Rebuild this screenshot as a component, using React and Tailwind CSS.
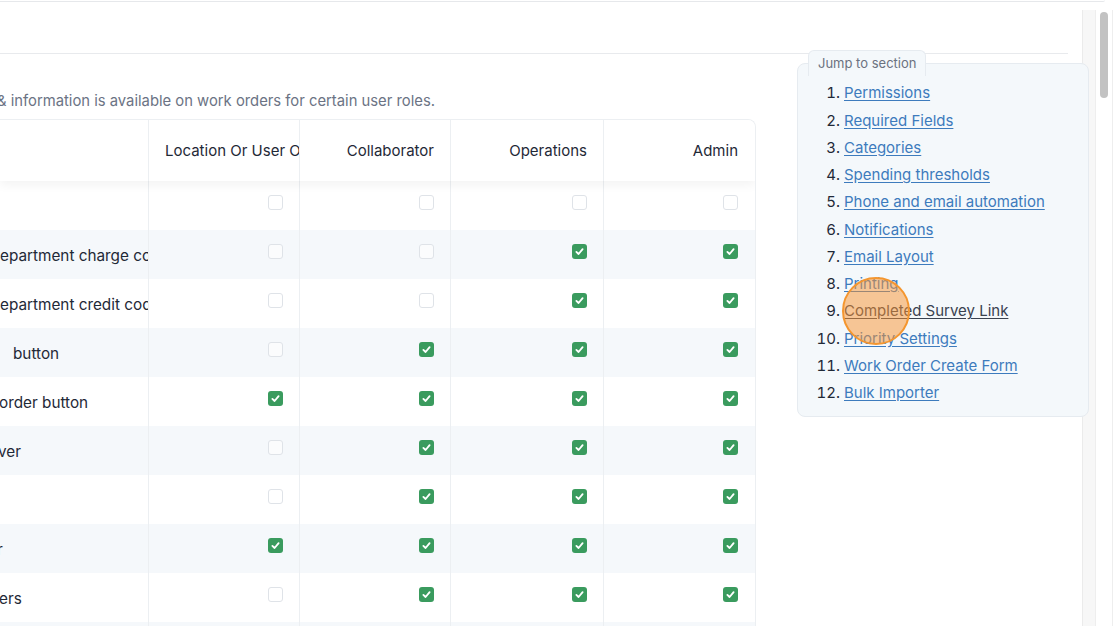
import React from "react";

const roles = ["Location Or User Owner", "Collaborator", "Operations", "Admin"];

// first column is scrolled off to the left, so only the tail of each label shows
const rows = [
  { label: "", shift: "ml-0", checks: [0, 0, 0, 0] },
  { label: "epartment charge codes", shift: "ml-0", checks: [0, 0, 1, 1] },
  { label: "epartment credit codes", shift: "ml-0", checks: [0, 0, 1, 1] },
  { label: "button", shift: "ml-[13px]", checks: [0, 1, 1, 1] },
  { label: "order button", shift: "-ml-[1px]", checks: [1, 1, 1, 1] },
  { label: "ver", shift: "-ml-[2px]", checks: [0, 1, 1, 1] },
  { label: "", shift: "ml-0", checks: [0, 1, 1, 1] },
  { label: "r", shift: "-ml-[3px]", checks: [1, 1, 1, 1] },
  { label: "ers", shift: "-ml-[1px]", checks: [0, 1, 1, 1] },
  { label: "", shift: "ml-0", checks: [0, 0, 0, 0] },
];

const sections = [
  "Permissions",
  "Required Fields",
  "Categories",
  "Spending thresholds",
  "Phone and email automation",
  "Notifications",
  "Email Layout",
  "Printing",
  "Completed Survey Link",
  "Priority Settings",
  "Work Order Create Form",
  "Bulk Importer",
];

function Check({ on }) {
  if (!on) {
    return <span className="block w-[15px] h-[15px] rounded-[3px] border-[1.5px] border-[#dfe3e8] bg-white/60 mb-[7px]" />;
  }
  return (
    <span className="flex items-center justify-center w-[15px] h-[15px] rounded-[3px] bg-[#3a9b5e] mb-[7px]">
      <svg width="11" height="11" viewBox="0 0 12 12" fill="none">
        <path d="M2.6 6.4 L5 8.7 L9.4 3.4" stroke="white" strokeWidth="2" strokeLinecap="round" strokeLinejoin="round" />
      </svg>
    </span>
  );
}

export default function App() {
  return (
    <div className="relative w-[1120px] h-[626px] overflow-hidden bg-white text-[#1f2937] font-['Inter','Liberation_Sans',sans-serif]">
      {/* top edge of the card above */}
      <div className="h-[2px] w-[1105px] border-b border-[#e6e8eb] rounded-br-md" />

      <div className="flex h-[624px]">
        {/* main column */}
        <div className="w-[1082px] shrink-0">
          <div className="h-[52px] w-[1068px] border-b border-[#e8eaed]" />

          <div className="flex">
            <div className="w-[797px] shrink-0 overflow-hidden">
              <p className="mt-[36px] mb-[7px] -ml-[3px] whitespace-nowrap text-[14.8px] leading-[22px] text-[#6b7384]">
                &amp; information is available on work orders for certain user roles.
              </p>

              {/* permissions table */}
              <div className="w-[756px] border-t border-r border-[#eceff2] rounded-tr-lg overflow-hidden">
                <div className="relative z-10 flex h-[61px] bg-white shadow-[0_4px_10px_rgba(0,0,0,0.05)]">
                  <div className="w-[148px] shrink-0" />
                  {roles.map((r, i) => (
                    <div
                      key={r}
                      className={`${i === 2 ? "w-[153px]" : "w-[151px]"} shrink-0 flex items-center justify-end px-4 pt-[1px] border-l border-[#eceff2] overflow-hidden whitespace-nowrap text-[15px]`}
                    >
                      <span className={i === 0 ? "w-full text-left" : ""}>{r}</span>
                    </div>
                  ))}
                </div>
                {rows.map((row, idx) => (
                  <div key={idx} className={`flex h-[49px] ${idx % 2 === 1 ? "bg-[#f5f8fb]" : "bg-white"}`}>
                    <div className="w-[148px] shrink-0 flex items-center pt-[3px] overflow-hidden whitespace-nowrap text-[15.3px]">
                      <span className={row.shift}>{row.label}</span>
                    </div>
                    {row.checks.map((c, i) => (
                      <div
                        key={i}
                        className={`${i === 2 ? "w-[153px]" : "w-[151px]"} shrink-0 flex items-center justify-end px-4 border-l border-[#eceff2]`}
                      >
                        <Check on={c} />
                      </div>
                    ))}
                  </div>
                ))}
              </div>
            </div>

            {/* jump to section */}
            <div className="relative z-10 w-[292px] shrink-0 -mt-[4px]">
              <div className="relative z-10 ml-[11px] inline-flex items-center h-[26px] px-[9px] rounded-t-md border border-b-0 border-[#e6ebf0] bg-[#f4f8fb] text-[13px] text-[#6b7280]">
                Jump to section
              </div>
              <div className="-mt-[13px] rounded-lg border border-[#e6ebf0] bg-[#f4f8fb] pt-[15px] pb-[10px]">
                <ol className="list-decimal pl-[46px] text-[15px] leading-[27.25px] marker:text-[#1f2937]">
                  {sections.map((s) => (
                    <li key={s}>
                      <a
                        href="#"
                        className={`underline underline-offset-[2px] ${s === "Completed Survey Link" ? "text-[#3a4250]" : "text-[#3d7bbd]"}`}
                      >
                        {s}
                      </a>
                    </li>
                  ))}
                </ol>
              </div>
            </div>
          </div>
        </div>

        {/* scroll rail */}
        <div className="flex pt-[8px]">
          <div className="w-[13px] h-full bg-[#f7f7f7] border-l border-[#ebebeb]" />
          <div className="w-[18px] h-full border-l border-r border-[#eeeeee] bg-white flex justify-center pt-[2px]">
            <div className="w-[8px] h-[86px] rounded-full bg-[#c2c2c2]" />
          </div>
        </div>
      </div>

      {/* click indicator */}
      <div className="absolute z-20 left-[842px] top-[277px] w-[68px] h-[68px] rounded-full border-2 border-[#f4962f] bg-[rgba(247,146,48,0.5)]" />
    </div>
  );
}
